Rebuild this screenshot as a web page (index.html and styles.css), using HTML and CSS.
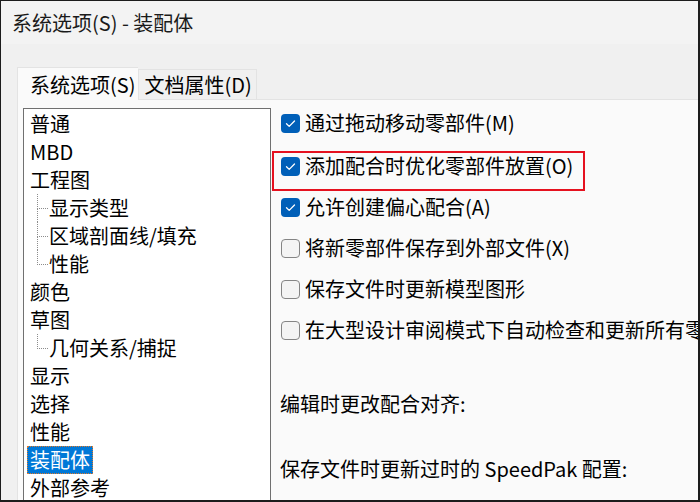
FILE: index.html
```html
<!DOCTYPE html>
<html lang="zh-CN">
<head>
<meta charset="utf-8">
<title>系统选项(S) - 装配体</title>
<link rel="stylesheet" href="styles.css">
</head>
<body>
<div class="window">
  <div class="titlebar">系统选项(S) - 装配体</div>
  <div class="dialog">
    <div class="tabs">
      <div class="tab active">系统选项(S)</div>
      <div class="tab">文档属性(D)</div>
    </div>
    <div class="panel">
      <ul class="tree">
        <li class="node">普通</li>
        <li class="node">MBD</li>
        <li class="node">工程图</li>
        <li class="node child">显示类型</li>
        <li class="node child">区域剖面线/填充</li>
        <li class="node child last">性能</li>
        <li class="node">颜色</li>
        <li class="node">草图</li>
        <li class="node child last">几何关系/捕捉</li>
        <li class="node">显示</li>
        <li class="node">选择</li>
        <li class="node">性能</li>
        <li class="node"><span class="selected">装配体</span></li>
        <li class="node">外部参考</li>
      </ul>
      <div class="options">
        <div class="row">
          <span class="box checked"><svg viewBox="0 0 19 19" width="19" height="19"><polyline points="5.5,9.8 8.2,12.4 13.5,7" fill="none" stroke="#fff" stroke-width="1.3" stroke-linecap="round" stroke-linejoin="round"/></svg></span>
          <span class="label">通过拖动移动零部件(M)</span>
        </div>
        <div class="row marked">
          <span class="box checked"><svg viewBox="0 0 19 19" width="19" height="19"><polyline points="5.5,9.8 8.2,12.4 13.5,7" fill="none" stroke="#fff" stroke-width="1.3" stroke-linecap="round" stroke-linejoin="round"/></svg></span>
          <span class="label">添加配合时优化零部件放置(O)</span>
        </div>
        <div class="row">
          <span class="box checked"><svg viewBox="0 0 19 19" width="19" height="19"><polyline points="5.5,9.8 8.2,12.4 13.5,7" fill="none" stroke="#fff" stroke-width="1.3" stroke-linecap="round" stroke-linejoin="round"/></svg></span>
          <span class="label">允许创建偏心配合(A)</span>
        </div>
        <div class="row">
          <span class="box"></span>
          <span class="label">将新零部件保存到外部文件(X)</span>
        </div>
        <div class="row">
          <span class="box"></span>
          <span class="label">保存文件时更新模型图形</span>
        </div>
        <div class="row">
          <span class="box"></span>
          <span class="label">在大型设计审阅模式下自动检查和更新所有零部件</span>
        </div>
        <div class="caption first">编辑时更改配合对齐:</div>
        <div class="caption">保存文件时更新过时的 SpeedPak 配置:</div>
      </div>
    </div>
  </div>
</div>
</body>
</html>
```

FILE: styles.css
```css
* { box-sizing: border-box; }
html, body { margin: 0; padding: 0; }
body {
  font-family: "Noto Sans CJK SC", "Noto Sans", sans-serif;
  font-size: 20px;
  color: #000;
  background: #f0f0f0;
}
.window {
  width: 700px;
  height: 502px;
  border-style: solid;
  border-color: #1c1c1c;
  border-width: 1px 2px 2px 1px;
  display: flex;
  flex-direction: column;
  overflow: hidden;
  background: #f0f0f0;
}
.titlebar {
  height: 43px;
  flex: none;
  background: #f3f3f3;
  padding-left: 11px;
  line-height: 43px;
  color: #1a1a1a;
  white-space: nowrap;
}
.dialog {
  flex: 1;
  display: flex;
  flex-direction: column;
  padding-left: 16px;
  min-height: 0;
}
.tabs {
  height: 55px;
  flex: none;
  display: flex;
  align-items: flex-end;
}
.tab {
  height: 30px;
  line-height: 30px;
  padding: 0 4px 0 5px;
  background: #f0f0f0;
  border: 1px solid #e3e3e3;
  border-bottom: none;
  white-space: nowrap;
}
.tab.active {
  height: 33px;
  line-height: 33px;
  padding: 0 3px 0 12px;
  background: #fafafa;
  border-right: none;
  margin-bottom: -1px;
  position: relative;
  z-index: 1;
}
.panel {
  flex: 1;
  min-height: 0;
  display: flex;
  background: #fafafa;
  border-top: 1px solid #e3e3e3;
  border-left: 1px solid #e3e3e3;
  padding: 8px 0 0 5px;
  overflow: hidden;
}
.tree {
  list-style: none;
  margin: 0;
  padding: 1px 0 0 0;
  width: 248px;
  flex: none;
  height: 420px;
  background: #fff;
  border: 1px solid #707070;
  border-bottom: none;
  overflow: hidden;
}
.node {
  height: 28px;
  line-height: 28px;
  padding-left: 6px;
  white-space: nowrap;
  position: relative;
}
.node.child { padding-left: 25px; }
.node.child::before {
  content: "";
  position: absolute;
  left: 13px;
  top: 0;
  width: 10px;
  height: 14px;
  border-left: 1px dotted #8c8c8c;
  border-bottom: 1px dotted #8c8c8c;
}
.node.child::after {
  content: "";
  position: absolute;
  left: 13px;
  top: 14px;
  bottom: 0;
  border-left: 1px dotted #8c8c8c;
}
.node.child.last::after { display: none; }
.selected {
  display: inline-block;
  height: 28px;
  line-height: 26px;
  margin-left: -3px;
  padding: 0 2px;
  background: #0078d7;
  color: #fff;
  border: 1px dotted #e07a2a;
}
.options {
  flex: 1;
  min-width: 0;
  display: flex;
  flex-direction: column;
  gap: 13px;
  padding-top: 1px;
  overflow: hidden;
}
.row {
  height: 28px;
  display: flex;
  align-items: center;
  gap: 5px;
  padding-left: 10px;
  white-space: nowrap;
  position: relative;
}
.row.marked { margin-top: 2px; }
.row.marked::after {
  content: "";
  position: absolute;
  left: 1px;
  top: -1px;
  width: 309px;
  height: 36px;
  border: 2px solid #e5111f;
}
.box {
  width: 19px;
  height: 19px;
  flex: none;
  border-radius: 4px;
  border: 1px solid #858585;
  background: #f4f4f4;
}
.box.checked {
  border: none;
  background: #005fb8;
}
.box svg { display: block; }
.label {
  line-height: 28px;
  white-space: nowrap;
}
.caption {
  height: 28px;
  line-height: 28px;
  padding-left: 9px;
  white-space: nowrap;
  margin-top: 24px;
}
.caption.first { margin-top: 33px; }
```
